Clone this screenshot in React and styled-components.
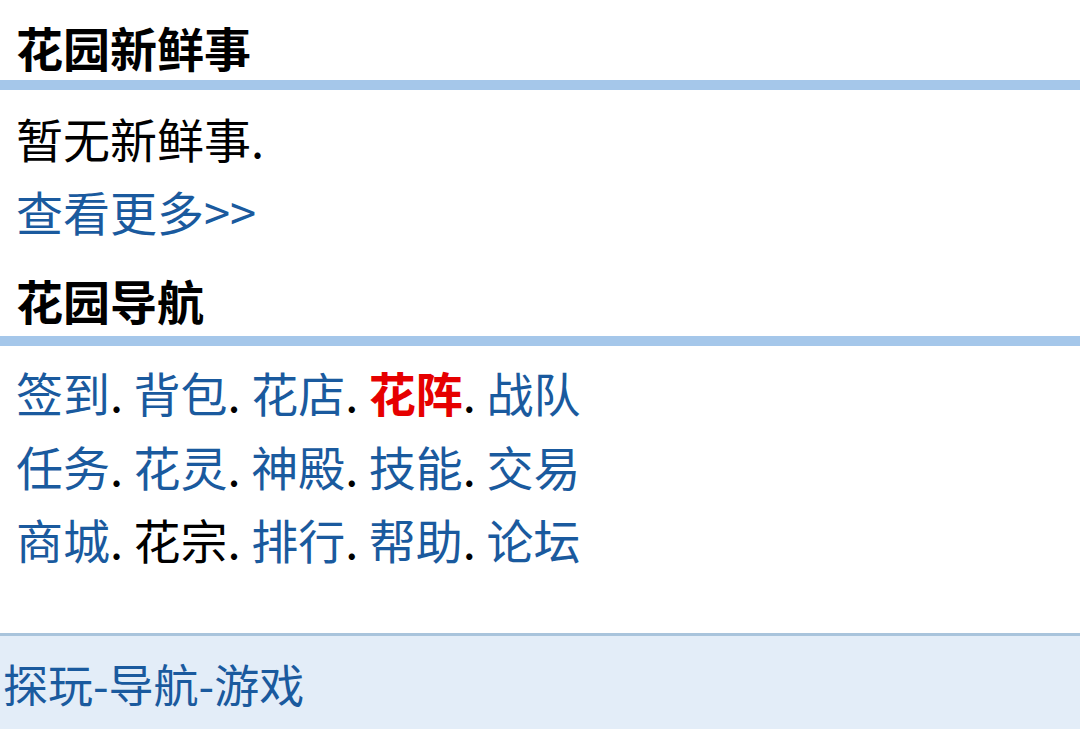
import React from "react";
import styled, { createGlobalStyle } from "styled-components";

const Global = createGlobalStyle`
  html, body { margin: 0; padding: 0; background: #fff; }
  body { font-family: "Noto Sans CJK SC", "Noto Sans", sans-serif; }
`;

const Page = styled.div`
  width: 1080px;
  height: 729px;
  display: flex;
  flex-direction: column;
  overflow: hidden;
`;

const Section = styled.section`
  display: flex;
  flex-direction: column;
`;

const Title = styled.h2`
  margin: 0;
  padding: ${p => p.$pad};
  font-size: 47px;
  font-weight: 700;
  line-height: 56px;
  color: #000;
  white-space: nowrap;
`;

const Bar = styled.div`
  height: 10px;
  background: #a5c7ea;
`;

const Body = styled.div`
  padding: ${p => p.$pad};
  display: flex;
  flex-direction: column;
`;

const Line = styled.div`
  font-size: 47px;
  line-height: ${p => p.$lh || "73px"};
  height: ${p => p.$lh || "73px"};
  color: #000;
  white-space: nowrap;
`;

const Link = styled.a`
  color: ${p => (p.$hot ? "#e60000" : p.$plain ? "#000" : "#1a5a9e")};
  font-weight: ${p => (p.$hot ? 700 : 400)};
  text-decoration: none;
`;

const Footer = styled.footer`
  margin-top: auto;
  height: 96px;
  box-sizing: border-box;
  border-top: 3px solid #a9c4dc;
  background: #e3edf8;
  display: flex;
  align-items: center;
  padding: 3px 3px 0;
`;

const FooterText = styled.span`
  font-size: 45px;
  line-height: 56px;
  color: #1a5a9e;
  white-space: nowrap;
`;

const navRows = [
  [["签到"], ["背包"], ["花店"], ["花阵", "hot"], ["战队"]],
  [["任务"], ["花灵"], ["神殿"], ["技能"], ["交易"]],
  [["商城"], ["花宗", "plain"], ["排行"], ["帮助"], ["论坛"]],
];

export default function App() {
  return (
    <Page>
      <Global />
      <Section>
        <Title $pad="19px 16px 5px">花园新鲜事</Title>
        <Bar />
        <Body $pad="11px 16px 0">
          <Line>暂无新鲜事.</Line>
          <Line><Link href="#">查看更多&gt;&gt;</Link></Line>
        </Body>
      </Section>
      <Section>
        <Title $pad="25px 16px 8px">花园导航</Title>
        <Bar />
        <Body $pad="9px 16px 0">
          {navRows.map((row, i) => (
            <Line key={i} $lh="73.5px">
              {row.map(([t, k], j) => (
                <React.Fragment key={t}>
                  <Link href="#" $hot={k === "hot"} $plain={k === "plain"}>{t}</Link>
                  {j < row.length - 1 ? ". " : ""}
                </React.Fragment>
              ))}
            </Line>
          ))}
        </Body>
      </Section>
      <Footer>
        <FooterText>探玩-导航-游戏</FooterText>
      </Footer>
    </Page>
  );
}
